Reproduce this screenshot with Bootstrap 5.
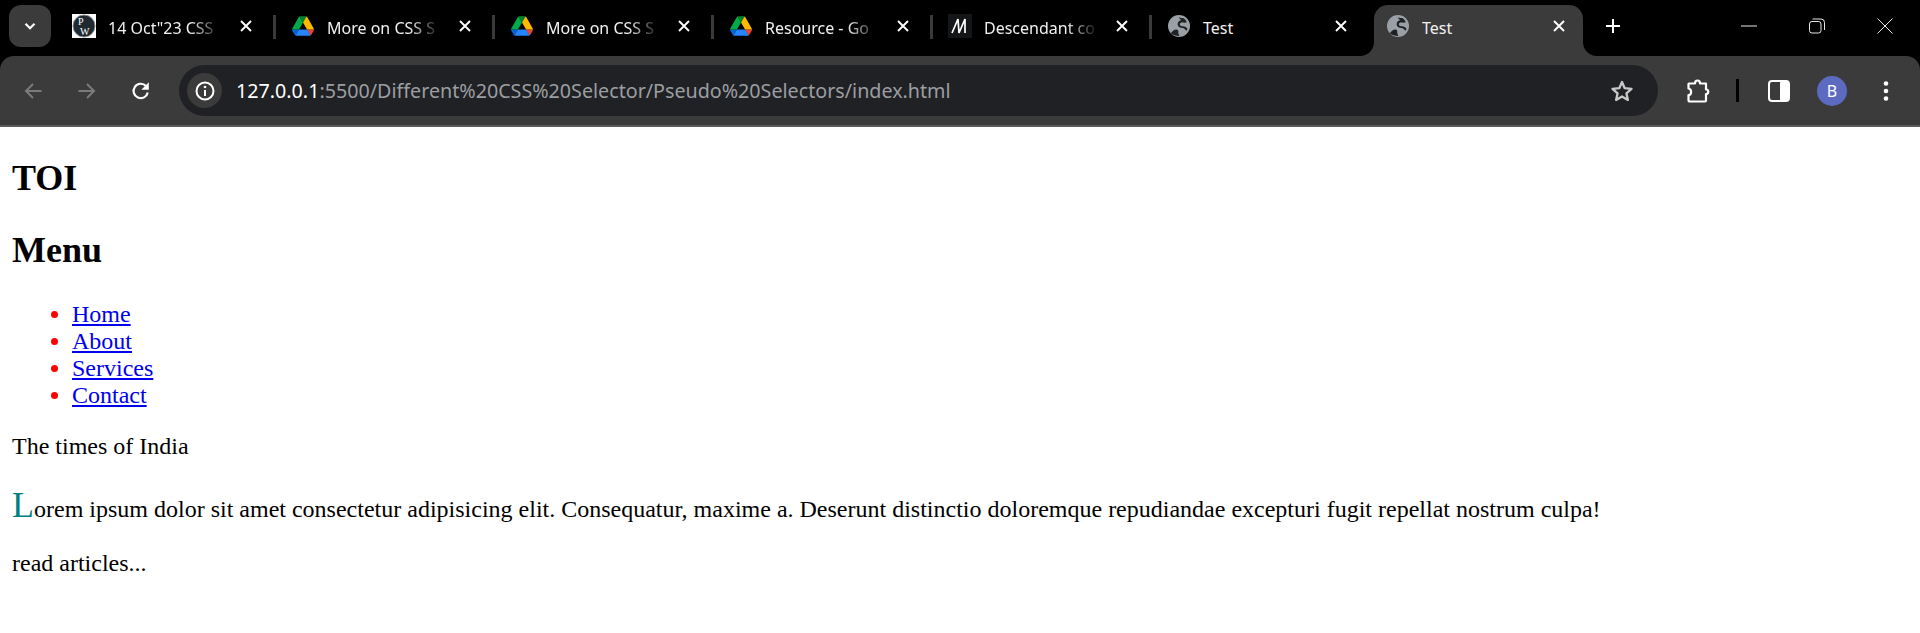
<!DOCTYPE html>
<html lang="en">
<head>
<meta charset="utf-8">
<title>Test</title>
<link href="https://cdn.jsdelivr.net/npm/bootstrap@5.3.0/dist/css/bootstrap.min.css" rel="stylesheet">
<style>
html,body{height:100%;}
body{margin:0;background:#fff;color:#000;font-family:"Liberation Serif",serif;font-size:24px;line-height:normal;overflow:hidden;}
.chrome-top{font-family:"Noto Sans",sans-serif;background:#000;color:#fff;}
.tabstrip{height:56px;padding-left:55px;position:relative;}
.tabs-menu{position:absolute;left:9px;top:5px;width:42px;height:42px;border-radius:12px;background:#3b3b3b;}
.tabbox{width:219px;height:51px;margin-top:5px;padding:0 22px 9px 17px;position:relative;}
.tabbox.sep::after{content:"";position:absolute;right:-2px;top:10px;width:3px;height:24px;background:#3a3a3a;}
.tabbox.live{background:#3b3b3b;border-radius:14px 14px 0 0;padding-left:12px;padding-right:18px;width:209px;margin-left:5px;}
.tabbox.live::before,.tabbox.live::after{content:"";position:absolute;bottom:0;width:14px;height:14px;}
.tabbox.live::before{left:-14px;background:radial-gradient(circle at 0 0,#000 13.5px,#3b3b3b 14.5px);}
.tabbox.live::after{right:-14px;background:radial-gradient(circle at 100% 0,#000 13.5px,#3b3b3b 14.5px);}
.fav{width:24px;height:24px;flex:none;display:block;}
.tabname{flex:1 1 0;min-width:0;margin-left:12px;padding-top:3px;font-size:16px;white-space:nowrap;overflow:hidden;color:#f1f1f1;-webkit-mask-image:linear-gradient(90deg,#000 72%,transparent 100%);mask-image:linear-gradient(90deg,#000 72%,transparent 100%);}
.tabname.whole{-webkit-mask-image:none;mask-image:none;}
.tabx{flex:none;width:12px;height:12px;margin-left:18px;display:block;}
.plusbtn{margin-left:22px;margin-bottom:4px;width:16px;height:16px;display:block;}
.winctl{margin-left:auto;margin-bottom:4px;margin-right:27px;}
.winctl svg{display:block;width:16px;height:16px;}
.winctl .gap-a{margin-left:52px;}
.toolbar{height:69px;background:#3b3b3b;border-radius:14px 14px 0 0;padding:9px 0;}
.rule{height:2px;background:#5b5b5b;}
.navicon{display:block;width:20px;height:20px;flex:none;}
.nav-back{margin-left:23px;}
.nav-step{margin-left:34px;}
.omni{height:51px;width:1479px;background:#202124;border-radius:26px;margin-left:28px;padding-left:8px;padding-right:24px;flex:none;}
.infobtn{width:35px;height:35px;background:#3b3b3b;border-radius:50%;flex:none;}
.urltext{margin-left:14px;font-size:19.7px;color:#9b9ea2;white-space:nowrap;}
.urltext b{font-weight:400;color:#fff;}
.tool-ext{margin-left:28px;flex:none;}
.tool-sep{margin-left:24px;width:3px;height:23px;background:#000;flex:none;}
.tool-panel{margin-left:29px;flex:none;}
.avatar{width:30px;height:30px;margin-left:27px;border-radius:50%;background:#5c6bc0;font-size:16px;color:#fff;flex:none;}
.tool-dots{margin-left:36px;flex:none;}
.pagearea{padding:0 12px;}
.pagearea h2{font-family:"Liberation Serif",serif;font-weight:700;font-size:36px;line-height:normal;margin:30px 0;}
.pagearea ul{margin:30px 0 24px;padding-left:60px;list-style:disc;}
.pagearea li::marker{color:red;}
.pagearea a{color:#00e;text-decoration:underline;}
.pagearea p{margin:24px 0;}
.intro::first-letter{font-size:36px;color:teal;}
</style>
</head>
<body>
<svg width="0" height="0" class="d-block" aria-hidden="true">
  <defs>
    <symbol id="drive" viewBox="0 0 87.3 78">
      <path d="m6.6 66.85 3.85 6.65c.8 1.4 1.95 2.5 3.3 3.3l13.75-23.8h-27.5c0 1.55.4 3.1 1.2 4.5z" fill="#0066da"/>
      <path d="m43.65 25-13.75-23.8c-1.35.8-2.5 1.9-3.3 3.3l-25.4 44a9.06 9.06 0 0 0 -1.2 4.5h27.5z" fill="#00ac47"/>
      <path d="m73.55 76.8c1.35-.8 2.5-1.9 3.3-3.3l1.6-2.75 7.65-13.25c.8-1.4 1.2-2.95 1.2-4.5h-27.502l5.852 11.5z" fill="#ea4335"/>
      <path d="m43.65 25 13.75-23.8c-1.35-.8-2.9-1.2-4.5-1.2h-18.5c-1.6 0-3.15.45-4.5 1.2z" fill="#00832d"/>
      <path d="m59.8 53h-32.3l-13.75 23.8c1.35.8 2.9 1.2 4.5 1.2h50.8c1.6 0 3.15-.45 4.5-1.2z" fill="#2684fc"/>
      <path d="m73.4 26.5-12.7-22c-.8-1.4-1.95-2.5-3.3-3.3l-13.75 23.8 16.15 28h27.45c0-1.55-.4-3.1-1.2-4.5z" fill="#ffba00"/>
    </symbol>
    <symbol id="globe" viewBox="0 0 24 24">
      <circle cx="12" cy="12" r="11" fill="#9aa0a6"/>
      <path d="M3.8 19.300c1.700-2.300 3.400-3.700 5.400-3.800 1.600-.1 2.300 1 2.100 2.300-.2 1.400.4 2.900 1.200 4.200-3.200.1-6.400-.8-8.700-2.700z" fill="#202124"/>
      <path d="M12.500 3.400c1.200.6 2.500.8 3.700.6 1.600 1 2.900 2.500 3.600 4.200-1.100.6-2.400.5-3.800.3-1.700-.2-3.200.3-3.200 1.700 0 1.500 1.500 2 3.200 2.100 2 .1 3.500 1 4.500 2.600-.3.700-.7 1.300-1.200 1.800-1-1.400-2.100-2.300-3.700-2.600-2.700-.4-5-1.500-5-3.900 0-2.700 2.200-3.700 3.700-4.100-1.100-.6-2-1.500-2.500-2.700z" fill="#202124"/>
    </symbol>
    <symbol id="xmark" viewBox="0 0 12 12">
      <path d="M1 1l10 10M11 1L1 11" stroke="#fff" stroke-width="1.900" fill="none"/>
    </symbol>
  </defs>
</svg>

<header class="chrome-top">
  <div class="tabstrip d-flex align-items-start">
    <div class="tabs-menu d-flex align-items-center justify-content-center">
      <svg width="14" height="14" viewBox="0 0 14 14"><path d="M2.500 4.800 7 9.200l4.500-4.400" stroke="#fff" stroke-width="2.200" fill="none"/></svg>
    </div>
    <div class="tabbox sep d-flex align-items-center">
      <svg class="fav" viewBox="0 0 24 24"><rect width="24" height="24" fill="#fff"/><circle cx="12" cy="12" r="11" fill="#1f2a30" stroke="#8a8f92" stroke-width="1"/><text x="6" y="11" font-family="Liberation Serif" font-size="10" fill="#fff">P</text><text x="8" y="20.500" font-family="Liberation Serif" font-size="10" fill="#fff">W</text></svg>
      <span class="tabname">14 Oct"23 CSS</span>
      <svg class="tabx"><use href="#xmark"/></svg>
    </div>
    <div class="tabbox sep d-flex align-items-center">
      <svg class="fav"><use href="#drive" x="1" y="2" width="22" height="20"/></svg>
      <span class="tabname">More on CSS S</span>
      <svg class="tabx"><use href="#xmark"/></svg>
    </div>
    <div class="tabbox sep d-flex align-items-center">
      <svg class="fav"><use href="#drive" x="1" y="2" width="22" height="20"/></svg>
      <span class="tabname">More on CSS S</span>
      <svg class="tabx"><use href="#xmark"/></svg>
    </div>
    <div class="tabbox sep d-flex align-items-center">
      <svg class="fav"><use href="#drive" x="1" y="2" width="22" height="20"/></svg>
      <span class="tabname">Resource - Go</span>
      <svg class="tabx"><use href="#xmark"/></svg>
    </div>
    <div class="tabbox sep d-flex align-items-center">
      <svg class="fav" viewBox="0 0 24 24"><rect width="24" height="24" fill="#15161a"/><path d="M4 19 10 5l1 14 6-14v14" stroke="#fff" stroke-width="1.700" fill="none"/></svg>
      <span class="tabname">Descendant co</span>
      <svg class="tabx"><use href="#xmark"/></svg>
    </div>
    <div class="tabbox d-flex align-items-center">
      <svg class="fav"><use href="#globe"/></svg>
      <span class="tabname whole">Test</span>
      <svg class="tabx"><use href="#xmark"/></svg>
    </div>
    <div class="tabbox live d-flex align-items-center">
      <svg class="fav"><use href="#globe"/></svg>
      <span class="tabname whole">Test</span>
      <svg class="tabx"><use href="#xmark"/></svg>
    </div>
    <svg class="plusbtn align-self-center" viewBox="0 0 16 16"><path d="M8 1v14M1 8h14" stroke="#fff" stroke-width="2" fill="none"/></svg>
    <div class="winctl align-self-center d-flex align-items-center">
      <svg viewBox="0 0 16 16"><path d="M0 8h16" stroke="#e8e8e8" stroke-width="1" fill="none"/></svg>
      <svg class="gap-a" viewBox="0 0 16 16"><rect x=".5" y="3.500" width="11.500" height="11.500" rx="2.500" stroke="#e8e8e8" fill="none"/><path d="M3.500 1h8.500a3.500 3.500 0 0 1 3.500 3.500V12" stroke="#e8e8e8" fill="none"/></svg>
      <svg class="gap-a" viewBox="0 0 16 16"><path d="M.5.5l15 15M15.500.5l-15 15" stroke="#e8e8e8" fill="none"/></svg>
    </div>
  </div>

  <nav class="toolbar d-flex align-items-center">
    <svg class="navicon nav-back" viewBox="0 0 20 20"><path d="M18.500 10H3M10 3l-7 7 7 7" stroke="#7b7b7b" stroke-width="2" fill="none"/></svg>
    <svg class="navicon nav-step" viewBox="0 0 20 20"><path d="M1.500 10H17M10 3l7 7-7 7" stroke="#7b7b7b" stroke-width="2" fill="none"/></svg>
    <svg class="navicon nav-step" viewBox="0 0 20 20"><path d="M16.800 11.500A7.200 7.200 0 1 1 15 5" stroke="#fff" stroke-width="2.200" fill="none"/><path d="M17.800 1.300v7.500h-7.500z" fill="#fff"/></svg>
    <div class="omni d-flex align-items-center">
      <div class="infobtn d-flex align-items-center justify-content-center">
        <svg width="20" height="20" viewBox="0 0 20 20"><circle cx="10" cy="10" r="8.500" stroke="#fff" stroke-width="2" fill="none"/><path d="M10 9v6" stroke="#fff" stroke-width="2"/><circle cx="10" cy="6" r="1.300" fill="#fff"/></svg>
      </div>
      <span class="urltext"><b>127.0.0.1</b>:5500/Different%20CSS%20Selector/Pseudo%20Selectors/index.html</span>
      <svg class="ms-auto" width="24" height="24" viewBox="0 0 24 24"><path d="M12 3l2.700 6.200 6.800.6-5.100 4.500 1.500 6.600L12 17.400l-5.900 3.500 1.500-6.600-5.100-4.500 6.800-.6z" stroke="#c8c8c8" stroke-width="2.300" fill="none" stroke-linejoin="round"/></svg>
    </div>
    <svg class="tool-ext" width="26" height="24" viewBox="0 0 26 24"><path d="M3 4.500h6c0-4 5-4 5 0h6v6c3 0 3 4.500 0 4.500v6.500a1 1 0 0 1-1 1H4a1.500 1.500 0 0 1-1.500-1.500v-5c3.500 0 3.500-6 0-6.500V5z" stroke="#fff" stroke-width="2.200" fill="none" stroke-linejoin="round"/></svg>
    <div class="tool-sep"></div>
    <svg class="tool-panel" width="22" height="22" viewBox="0 0 22 22"><rect x="1" y="1" width="20" height="20" rx="3" stroke="#fff" stroke-width="2" fill="none"/><rect x="12" y="1" width="9" height="20" rx="2" fill="#fff"/></svg>
    <div class="avatar d-flex align-items-center justify-content-center">B</div>
    <svg class="tool-dots" width="6" height="22" viewBox="0 0 6 22"><circle cx="3" cy="3.500" r="2.300" fill="#fff"/><circle cx="3" cy="11" r="2.300" fill="#fff"/><circle cx="3" cy="18.500" r="2.300" fill="#fff"/></svg>
  </nav>
  <div class="rule"></div>
</header>

<main class="pagearea">
  <h2>TOI</h2>
  <h2>Menu</h2>
  <ul>
    <li><a href="#">Home</a></li>
    <li><a href="#">About</a></li>
    <li><a href="#">Services</a></li>
    <li><a href="#">Contact</a></li>
  </ul>
  <p>The times of India</p>
  <p class="intro">Lorem ipsum dolor sit amet consectetur adipisicing elit. Consequatur, maxime a. Deserunt distinctio doloremque repudiandae excepturi fugit repellat nostrum culpa!</p>
  <p>read articles...</p>
</main>
</body>
</html>
